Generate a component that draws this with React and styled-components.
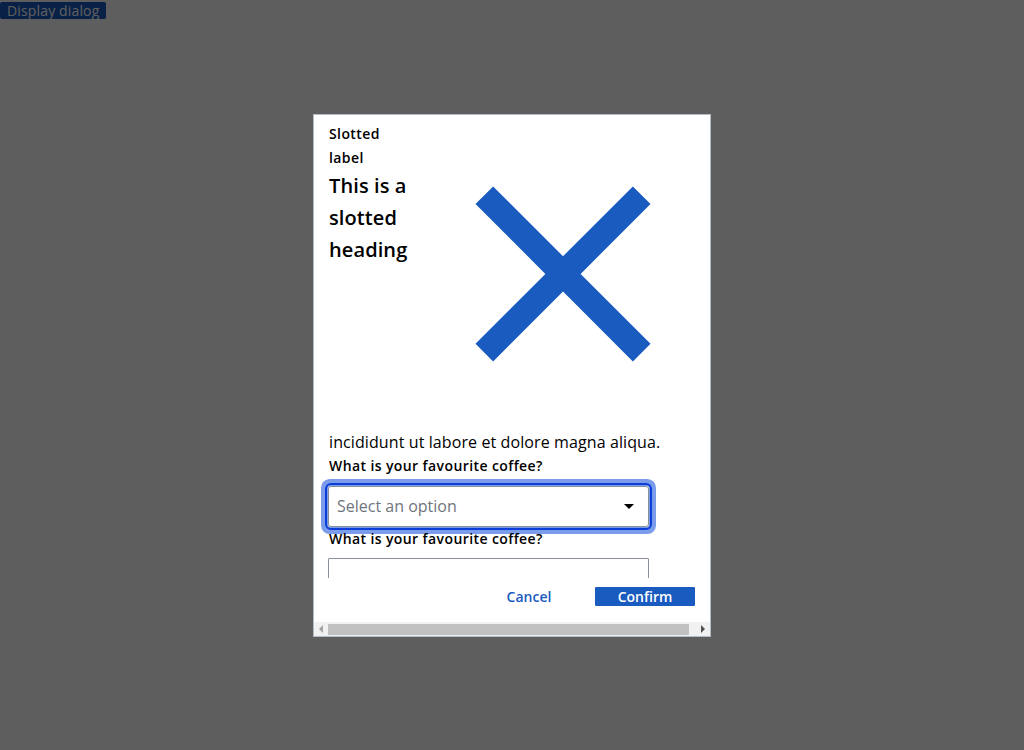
import React from "react";
import styled, { createGlobalStyle } from "styled-components";

const Global = createGlobalStyle`
  html, body { margin: 0; padding: 0; background: #ffffff; }
  body { font-family: "Open Sans", "Noto Sans", sans-serif; }
  * { box-sizing: border-box; }
`;

const Page = styled.div`
  width: 1024px;
  height: 750px;
  position: relative;
  overflow: hidden;
`;

const OpenButton = styled.button`
  margin: 2px 0 0 0;
  padding: 0 7px;
  height: 17px;
  border: none;
  border-radius: 2px;
  background: #1a5bbf;
  color: #ffffff;
  font-family: "Open Sans", sans-serif;
  font-size: 14px;
  letter-spacing: 0.15px;
  line-height: 17px;
  display: block;
`;

const Overlay = styled.div`
  position: fixed;
  inset: 0;
  background: rgba(0, 0, 0, 0.632);
  display: flex;
  align-items: center;
  justify-content: center;
`;

const Dialog = styled.div`
  width: 398px;
  height: 523px;
  background: #ffffff;
  border: 1px solid #b3bcc7;
  display: flex;
  flex-direction: column;
  overflow: hidden;
`;

const Body = styled.div`
  flex: 0 0 463px;
  overflow: hidden;
  padding: 7px 16px 0 15px;
  color: #000000;
`;

const HeaderRow = styled.div`
  display: flex;
  align-items: center;
  width: 384px;
`;

const TextCol = styled.div`
  flex: 0 0 84px;
  align-self: flex-start;
`;

const SlotLabel = styled.div`
  font-size: 14px;
  font-weight: 600;
  letter-spacing: 0.4px;
  line-height: 24px;
`;

const SlotHeading = styled.h2`
  margin: 0;
  font-size: 20px;
  font-weight: 600;
  letter-spacing: 0.1px;
  line-height: 32px;
`;

const IconBox = styled.div`
  flex: 0 0 300px;
  height: 300px;
  color: #1a5bbf;
  svg { display: block; width: 300px; height: 300px; }
`;

const Paragraph = styled.p`
  margin: 8px 0 0 0;
  font-size: 16px;
  letter-spacing: 0.1px;
  line-height: 24px;
  white-space: nowrap;
`;

const FieldLabel = styled.label`
  display: block;
  font-size: 14px;
  font-weight: 600;
  letter-spacing: 0.4px;
  line-height: 24px;
  margin-bottom: ${(p) => p.$gap}px;
`;

const SelectBox = styled.div`
  width: 321px;
  height: 41px;
  margin-left: -1px;
  border: 1px solid #8a9099;
  display: flex;
  align-items: center;
  justify-content: space-between;
  padding: 0 14px 0 8px;
  font-size: 16px;
  color: #6f757d;
  outline: 2px solid #0b3ed8;
  outline-offset: 1px;
  box-shadow: 0 0 0 7px #7b9ceb;
  border-radius: 3px;
`;

const Caret = styled.span`
  width: 0;
  height: 0;
  border-left: 5px solid transparent;
  border-right: 5px solid transparent;
  border-top: 5px solid #000000;
`;

const TextInput = styled.input`
  display: block;
  width: 321px;
  height: 40px;
  margin-left: -1px;
  border: 1px solid #8a9099;
  border-radius: 1px;
  font-family: "Open Sans", sans-serif;
  font-size: 16px;
  padding: 0 8px;
  background: #ffffff;
`;

const Footer = styled.div`
  flex: 0 0 44px;
  display: flex;
  justify-content: flex-end;
  align-items: flex-start;
  gap: 16px;
  padding: 9px 15px 0 0;
`;

const ActionButton = styled.button`
  width: 100px;
  height: 19px;
  padding: 0;
  border: none;
  border-radius: 1px;
  font-family: "Open Sans", sans-serif;
  font-size: 14px;
  font-weight: 600;
  line-height: 19px;
  background: ${(p) => (p.$primary ? "#1a5bbf" : "transparent")};
  color: ${(p) => (p.$primary ? "#ffffff" : "#1a5bbf")};
`;

const ScrollBar = styled.div`
  flex: 0 0 14px;
  background: #f1f1f1;
  display: flex;
  align-items: stretch;
`;

const ScrollArrow = styled.div`
  flex: 0 0 14px;
  display: flex;
  align-items: center;
  justify-content: center;
  &::before {
    content: "";
    width: 0;
    height: 0;
    border-top: 4px solid transparent;
    border-bottom: 4px solid transparent;
    ${(p) =>
      p.$dir === "left"
        ? `border-right: 4px solid ${p.$active ? "#505050" : "#a3a3a3"};`
        : `border-left: 4px solid ${p.$active ? "#505050" : "#a3a3a3"};`}
  }
`;

const Thumb = styled.div`
  flex: 0 0 361px;
  margin: 2px 0 1px 0;
  background: #c1c1c1;
`;

const Track = styled.div`
  flex: 1;
`;

function CloseIcon() {
  return (
    <svg viewBox="0 -0.15 24 24" fill="currentColor" aria-hidden="true">
      <path d="M19 6.41L17.59 5 12 10.59 6.41 5 5 6.41 10.59 12 5 17.59 6.41 19 12 13.41 17.59 19 19 17.59 13.41 12z" />
    </svg>
  );
}

export default function App() {
  return (
    <>
      <Global />
      <Page>
        <OpenButton>Display dialog</OpenButton>
        <Overlay>
          <Dialog role="dialog" aria-modal="true">
            <Body>
              <HeaderRow>
                <TextCol>
                  <SlotLabel>Slotted label</SlotLabel>
                  <SlotHeading>This is a slotted heading</SlotHeading>
                </TextCol>
                <IconBox>
                  <CloseIcon />
                </IconBox>
              </HeaderRow>
              <Paragraph>incididunt ut labore et dolore magna aliqua.</Paragraph>
              <FieldLabel $gap={8}>What is your favourite coffee?</FieldLabel>
              <SelectBox role="combobox">
                <span>Select an option</span>
                <Caret />
              </SelectBox>
              <FieldLabel $gap={7}>What is your favourite coffee?</FieldLabel>
              <TextInput type="text" />
            </Body>
            <Footer>
              <ActionButton>Cancel</ActionButton>
              <ActionButton $primary>Confirm</ActionButton>
            </Footer>
            <ScrollBar>
              <ScrollArrow $dir="left" />
              <Thumb />
              <Track />
              <ScrollArrow $dir="right" $active />
            </ScrollBar>
          </Dialog>
        </Overlay>
      </Page>
    </>
  );
}
